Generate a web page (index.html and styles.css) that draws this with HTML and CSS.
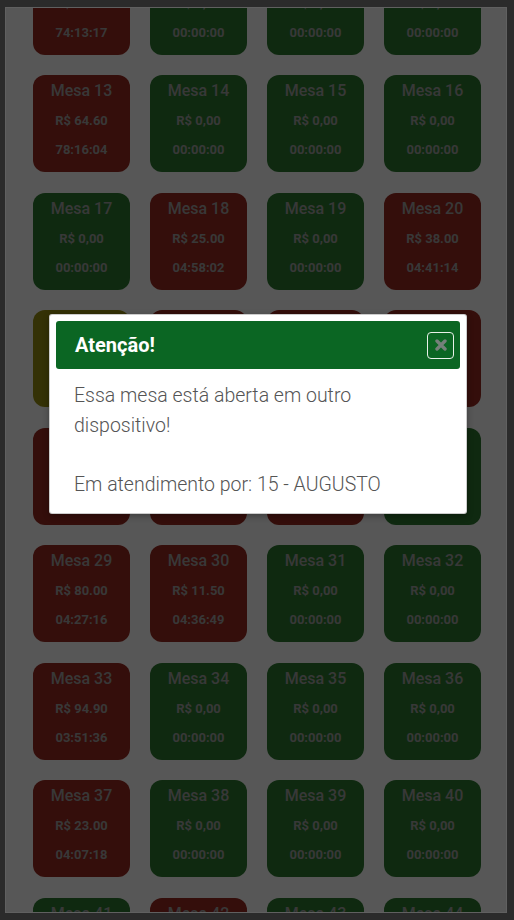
FILE: index.html
```html
<!DOCTYPE html>
<html lang="pt-BR">
<head>
    <meta charset="UTF-8">
    <meta name="viewport" content="width=device-width, initial-scale=1.0">
    <title>Mesas</title>
    <link rel="stylesheet" href="styles.css">
</head>
<body>
    <div class="screen">
        <div class="mesas" id="mesas"></div>

        <!-- Modal de aviso -->
        <div class="backdrop"></div>
        <div class="modal">
            <div class="modal-header">
                <h2>Atenção!</h2>
                <button type="button" class="btn-close" aria-label="Fechar">
                    <svg width="12" height="12" viewBox="0 0 12 12">
                        <path d="M2 2 L10 10 M10 2 L2 10" stroke="#75807a" stroke-width="3.4" stroke-linecap="round"/>
                    </svg>
                </button>
            </div>
            <div class="modal-body">
                <p>Essa mesa está aberta em outro dispositivo!</p>
                <p>Em atendimento por: 15 - AUGUSTO</p>
            </div>
        </div>
    </div>

    <script>
        // status: livre = verde, ocupada = vermelho, conta = amarelo
        const mesas = [
            [9, "ocupada", "R$ 41.20", "74:13:17"], [10, "livre"], [11, "livre"], [12, "livre"],
            [13, "ocupada", "R$ 64.60", "78:16:04"], [14, "livre"], [15, "livre"], [16, "livre"],
            [17, "livre"], [18, "ocupada", "R$ 25.00", "04:58:02"], [19, "livre"], [20, "ocupada", "R$ 38.00", "04:41:14"],
            [21, "conta", "R$ 57.00", "05:02:11"], [22, "ocupada", "R$ 19.50", "04:50:33"], [23, "ocupada", "R$ 32.00", "04:44:09"], [24, "ocupada", "R$ 12.00", "04:39:40"],
            [25, "ocupada", "R$ 46.80", "04:33:21"], [26, "ocupada", "R$ 8.50", "04:31:02"], [27, "ocupada", "R$ 27.00", "04:29:55"], [28, "livre"],
            [29, "ocupada", "R$ 80.00", "04:27:16"], [30, "ocupada", "R$ 11.50", "04:36:49"], [31, "livre"], [32, "livre"],
            [33, "ocupada", "R$ 94.90", "03:51:36"], [34, "livre"], [35, "livre"], [36, "livre"],
            [37, "ocupada", "R$ 23.00", "04:07:18"], [38, "livre"], [39, "livre"], [40, "livre"],
            [41, "livre"], [42, "ocupada", "R$ 15.00", "03:40:12"], [43, "livre"], [44, "livre"]
        ];

        const lista = document.getElementById("mesas");
        mesas.forEach(([numero, status, valor = "R$ 0,00", tempo = "00:00:00"]) => {
            const card = document.createElement("div");
            card.className = "mesa " + status;
            card.innerHTML = `<span class="mesa-nome">Mesa ${numero}</span>` +
                `<span class="mesa-valor">${valor}</span>` +
                `<span class="mesa-tempo">${tempo}</span>`;
            lista.appendChild(card);
        });
    </script>
</body>
</html>
```

FILE: styles.css
```css
* {
    box-sizing: border-box;
}
body {
    margin: 0;
    padding: 7px 8px 7px 5px;
    background-color: #2b2b2b;
    font-family: Roboto, "Liberation Sans", Arial, sans-serif;
}
.screen {
    position: relative;
    width: 502px;
    height: 906px;
    border: 1px solid #606060;
    background: #fff;
    overflow: hidden;
}
.mesas {
    display: grid;
    grid-template-columns: repeat(4, 97px);
    column-gap: 20px;
    row-gap: 20.5px;
    padding-left: 27px;
    margin-top: -50.5px;
}
.mesa {
    height: 97px;
    border-radius: 12px;
    color: #a4a4a4;
    text-align: center;
    display: flex;
    flex-direction: column;
    align-items: center;
    padding-top: 4px;
}
.livre {
    background: #2e7a31;
}
.ocupada {
    background: #992a20;
}
.conta {
    background: #9a9012;
}
.mesa-nome {
    font-size: 16px;
    font-weight: 500;
    line-height: 24px;
}
.mesa-valor,
.mesa-tempo {
    font-size: 13px;
    font-weight: 700;
    line-height: 18px;
}
.mesa-valor {
    margin-top: 9px;
}
.mesa-tempo {
    margin-top: 11px;
}
.backdrop {
    position: absolute;
    top: 0;
    left: 0;
    width: 100%;
    height: 100%;
    z-index: 10;
    background: rgba(0, 0, 0, 0.66);
}
.modal {
    position: absolute;
    top: 306px;
    left: 43px;
    z-index: 20;
    width: 418px;
    padding: 6px 6px 14px;
    background: #fff;
    border: 1px solid rgba(0, 0, 0, 0.2);
    border-radius: 3px;
    box-shadow: 0 2px 6px rgba(0, 0, 0, 0.3);
}
.modal-header {
    display: flex;
    align-items: center;
    justify-content: space-between;
    height: 48px;
    padding: 0 6px 0 19px;
    background: #0b6623;
    border-radius: 3px;
}
.modal-header h2 {
    margin: 0;
    color: #fff;
    font-size: 20px;
    font-weight: 700;
}
.btn-close {
    display: flex;
    align-items: center;
    justify-content: center;
    width: 27px;
    height: 27px;
    padding: 0;
    background: transparent;
    border: 1px solid #e8f0e8;
    border-radius: 4px;
    cursor: pointer;
}
.modal-body {
    padding: 12px 40px 0 18px;
    color: #555;
    font-family: "Roboto Light", Roboto, "Liberation Sans", Arial, sans-serif;
    font-size: 19.5px;
    font-weight: 300;
    line-height: 29.5px;
}
.modal-body p {
    margin: 0 0 29.5px;
}
.modal-body p:last-child {
    margin-bottom: 0;
}
```
